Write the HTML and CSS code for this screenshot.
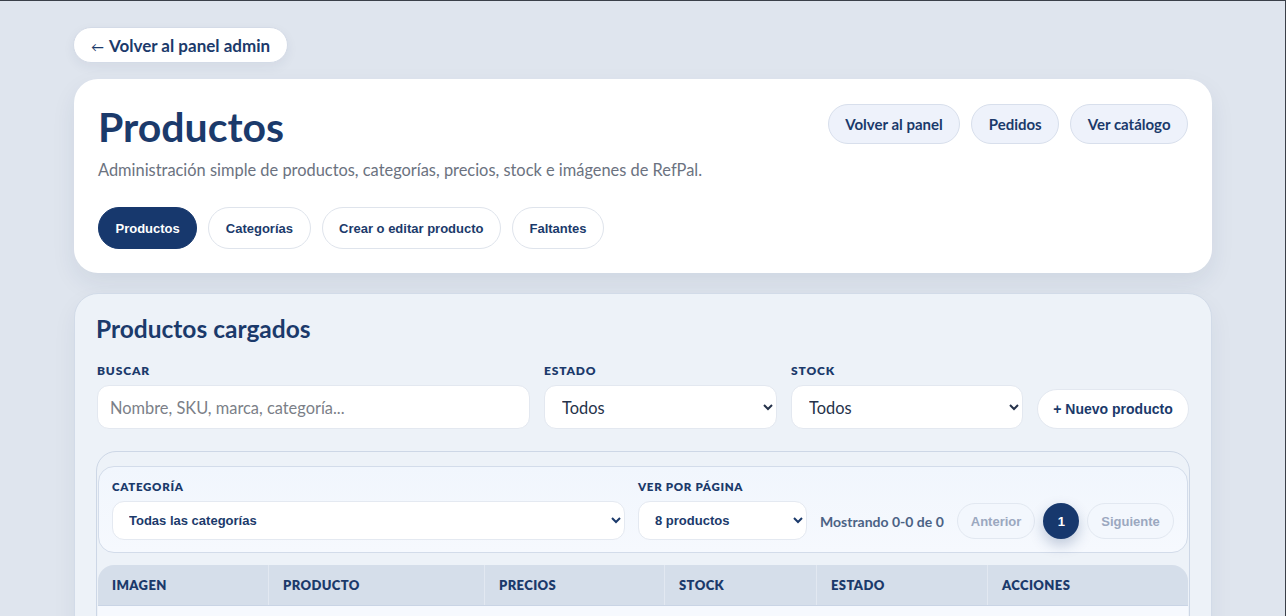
FILE: index.html
```html
<!DOCTYPE html>
<html lang="es">
<head>
<meta charset="utf-8">
<title>Productos</title>
<link rel="stylesheet" href="styles.css">
</head>
<body>
<div class="page">
  <a class="back-btn" href="#"><span class="arrow">←</span> Volver al panel admin</a>

  <section class="hero card">
    <div class="hero-top">
      <div class="hero-text">
        <h1 class="hero-title">Productos</h1>
        <p class="hero-sub">Administración simple de productos, categorías, precios, stock e imágenes de RefPal.</p>
      </div>
      <div class="hero-actions">
        <a class="soft-btn" href="#">Volver al panel</a>
        <a class="soft-btn" href="#">Pedidos</a>
        <a class="soft-btn" href="#">Ver catálogo</a>
      </div>
    </div>
    <nav class="tabs">
      <button class="tab tab-active">Productos</button>
      <button class="tab">Categorías</button>
      <button class="tab">Crear o editar producto</button>
      <button class="tab">Faltantes</button>
    </nav>
  </section>

  <section class="list card-soft">
    <h2 class="list-title">Productos cargados</h2>
    <div class="filters">
      <label class="field">
        <span class="field-label">Buscar</span>
        <input class="input" type="text" placeholder="Nombre, SKU, marca, categoría...">
      </label>
      <label class="field">
        <span class="field-label">Estado</span>
        <select class="select"><option>Todos</option></select>
      </label>
      <label class="field">
        <span class="field-label">Stock</span>
        <select class="select"><option>Todos</option></select>
      </label>
      <div class="field field-btn">
        <button class="new-btn">+ Nuevo producto</button>
      </div>
    </div>

    <div class="table-wrap">
      <div class="toolbar">
        <label class="field cat-field">
          <span class="field-label">Categoría</span>
          <select class="select-sm"><option>Todas las categorías</option></select>
        </label>
        <label class="field per-field">
          <span class="field-label">Ver por página</span>
          <select class="select-sm"><option>8 productos</option></select>
        </label>
        <div class="pager">
          <span class="pager-info">Mostrando 0-0 de 0</span>
          <button class="pg-btn" disabled>Anterior</button>
          <button class="pg-num">1</button>
          <button class="pg-btn" disabled>Siguiente</button>
        </div>
      </div>
      <div class="table">
        <div class="thead">
          <div class="th c1">Imagen</div>
          <div class="th c2">Producto</div>
          <div class="th c3">Precios</div>
          <div class="th c4">Stock</div>
          <div class="th c5">Estado</div>
          <div class="th c6">Acciones</div>
        </div>
        <div class="tbody"></div>
      </div>
    </div>
  </section>
</div>
</body>
</html>
```

FILE: styles.css
```css
html {
  border-top: 1px solid #3b4049;
  border-right: 1px solid #3b4049;
  background: #dfe5ee;
}
* { box-sizing: border-box; }
body {
  margin: 0;
  background: #dfe5ee;
  font-family: "Lato", "Open Sans", sans-serif;
  color: #1b3a6b;
  overflow: hidden;
}
.page {
  padding: 26px 73px 0 73px;
}
.back-btn {
  display: inline-flex;
  align-items: center;
  gap: 5px;
  height: 36px;
  padding: 0 17px 0 17px;
  background: #fff;
  border: 1px solid #d4dbe7;
  border-radius: 999px;
  color: #1b3a6b;
  font-weight: 700;
  font-size: 17px;
  text-decoration: none;
  box-shadow: 0 4px 12px rgba(30, 50, 90, 0.06);
}
.arrow {
  font-size: 13px;
  font-weight: 400;
  padding-top: 3px;
}
.card {
  background: #fff;
  border-radius: 24px;
  box-shadow: 0 10px 24px rgba(30, 50, 90, 0.08);
}
.hero {
  margin: 16px 0 0 1px;
  height: 194px;
  padding: 24px 24px 24px 24px;
}
.hero-top {
  display: flex;
  justify-content: space-between;
  align-items: flex-start;
}
.hero-title {
  margin: 0;
  font-size: 41px;
  line-height: 48px;
  font-weight: 700;
  color: #1b3a6b;
}
.hero-sub {
  margin: 9px 0 0;
  font-size: 16.4px;
  color: #6b7280;
}
.hero-actions {
  display: flex;
  gap: 11px;
  margin-top: 1px;
}
.soft-btn {
  display: inline-flex;
  align-items: center;
  height: 40px;
  padding: 0 16.5px;
  background: #eef2fb;
  border: 1px solid #d8dfec;
  border-radius: 999px;
  color: #1b3a6b;
  font-weight: 700;
  font-size: 15px;
  text-decoration: none;
}
.tabs {
  display: flex;
  gap: 11px;
  margin-top: 28px;
}
.tab {
  height: 42px;
  padding: 0 16.5px;
  border-radius: 999px;
  border: 1px solid #dfe4ec;
  background: #fff;
  color: #1b3a6b;
  font-family: "Liberation Sans", Arial, sans-serif;
  font-weight: 700;
  font-size: 13px;
}
.tab-active {
  background: #17386d;
  border-color: #17386d;
  color: #fff;
}
.card-soft {
  background: #edf2f8;
  border: 1px solid #d2dbe8;
  border-radius: 24px;
  box-shadow: 0 10px 24px rgba(30, 50, 90, 0.06);
}
.list {
  margin: 20px 0 0 1px;
  padding: 20px 22px 0 22px;
  height: 400px;
}
.list-title {
  margin: 0 0 0 -1px;
  font-size: 24.5px;
  line-height: 30px;
  font-weight: 700;
  color: #1b3a6b;
}
.filters {
  display: grid;
  grid-template-columns: 433px 233px 232px 152px;
  gap: 14px;
  align-items: end;
  margin-top: 20px;
}
.field {
  display: flex;
  flex-direction: column;
}
.field-label {
  font-size: 12px;
  font-weight: 800;
  letter-spacing: 0.07em;
  text-transform: uppercase;
  color: #1b3a6b;
  margin-bottom: 7px;
  line-height: 14px;
}
.input, .select {
  height: 44px;
  border: 1px solid #e3e8f0;
  border-radius: 12px;
  background: #fff;
  font-family: inherit;
  font-size: 16.4px;
  color: #1b3a6b;
  padding: 0 12px;
}
.input::placeholder { color: #7b7f88; }
.select { padding: 0 13px; color: #25324a; }
.field-btn { justify-content: flex-end; }
.new-btn {
  height: 40px;
  margin-bottom: 0;
  border-radius: 999px;
  border: 1px solid #e3e8f0;
  background: #fff;
  color: #1b3a6b;
  font-family: "Liberation Sans", Arial, sans-serif;
  font-weight: 700;
  font-size: 14px;
}
.table-wrap {
  margin: 22px -1px 0;
  border: 1px solid #cdd7e6;
  border-radius: 20px;
  padding: 14px 1px 0;
  background: #edf2f8;
  height: 200px;
}
.toolbar {
  display: flex;
  align-items: flex-end;
  gap: 13px;
  padding: 13px 14px 12px 13px;
  border: 1px solid #d3dcea;
  border-radius: 16px;
  background: linear-gradient(#f1f6fd, #f6f9fe);
}
.cat-field { width: 513px; flex: none; }
.per-field { width: 169px; flex: none; }
.toolbar .field-label { font-size: 11.5px; margin-bottom: 7px; letter-spacing: 0.06em; }
.select-sm {
  height: 39px;
  border: 1px solid #e4e9f1;
  border-radius: 12px;
  background: #fff;
  font-family: "Liberation Sans", Arial, sans-serif;
  font-weight: 700;
  font-size: 13px;
  color: #1b3a6b;
  padding: 0 12px;
}
.pager {
  display: flex;
  align-items: center;
  gap: 8px;
  height: 38px;
  white-space: nowrap;
}
.pager-info {
  font-size: 14px;
  font-weight: 700;
  color: #4b6285;
  margin-right: 5px;
}
.pg-btn {
  height: 36px;
  padding: 0 13px;
  border-radius: 999px;
  border: 1px solid #e2e8f1;
  background: #f3f7fd;
  color: #9ba8c0;
  font-family: "Liberation Sans", Arial, sans-serif;
  font-weight: 700;
  font-size: 13px;
}
.pg-num {
  width: 36px;
  height: 36px;
  border-radius: 50%;
  border: none;
  background: #17386d;
  color: #fff;
  font-family: "Liberation Sans", Arial, sans-serif;
  font-weight: 700;
  font-size: 13px;
  box-shadow: 0 6px 14px rgba(23, 56, 109, 0.25);
}
.table {
  margin-top: 12px;
}
.thead {
  display: grid;
  grid-template-columns: 170px 216px 180px 152px 171px 1fr;
  background: #d5deea;
  border-radius: 16px 16px 0 0;
  border-bottom: 1px solid #c9d4e5;
}
.th {
  height: 40px;
  display: flex;
  align-items: center;
  padding-left: 14px;
  font-size: 13px;
  font-weight: 800;
  letter-spacing: 0.03em;
  text-transform: uppercase;
  color: #1b3a6b;
  border-left: 1px solid #e2e8f1;
}
.th.c1 { border-left: none; }
.tbody {
  background: #f6f9fe;
  height: 60px;
}
```
